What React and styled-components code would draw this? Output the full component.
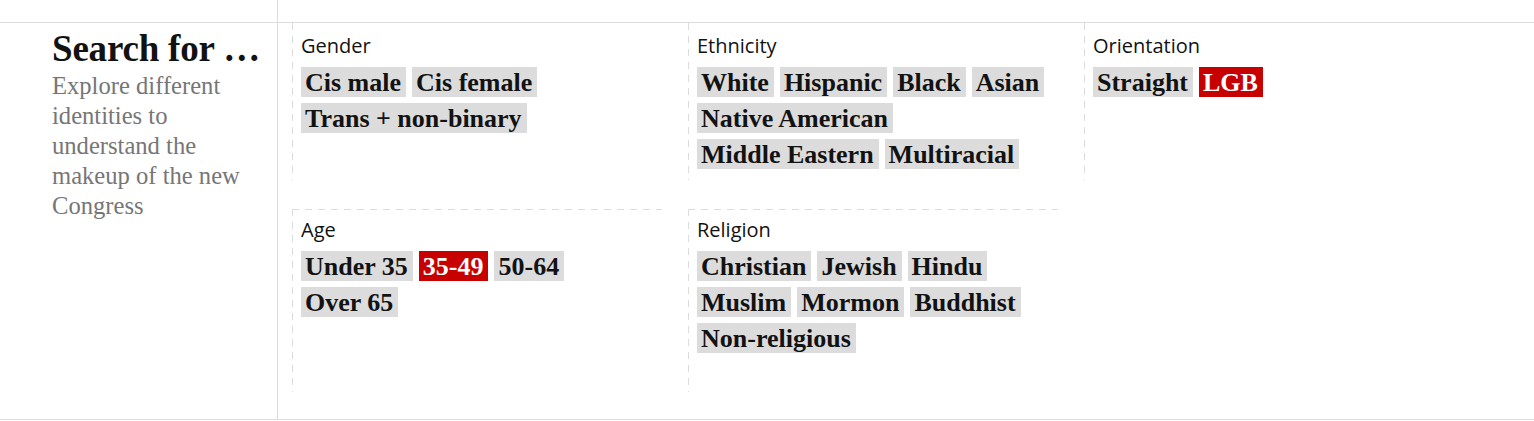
import React from "react";
import styled, { createGlobalStyle } from "styled-components";

const Global = createGlobalStyle`
  html, body { margin: 0; padding: 0; background: #ffffff; }
  body { font-family: "Liberation Serif", serif; color: #121212; }
`;

const Page = styled.div`
  display: flex;
  border-bottom: 1px solid #dcdcdc;
  background: #fff;
`;

const Side = styled.aside`
  width: 277px;
  flex: 0 0 277px;
  border-right: 1px solid #dcdcdc;
  display: flex;
  flex-direction: column;
`;

const Main = styled.main`
  flex: 1;
  display: flex;
  flex-direction: column;
`;

const TopBand = styled.div`
  height: 22px;
  border-bottom: 1px solid #dcdcdc;
`;

const Intro = styled.div`
  padding: 6px 16px 0 52px;
`;

const Heading = styled.h2`
  margin: 0;
  font-family: "Liberation Serif", serif;
  font-weight: 700;
  font-size: 37px;
  line-height: 40px;
  color: #121212;
  letter-spacing: -0.2px;
`;

const Blurb = styled.p`
  margin: 2px 0 0;
  width: 205px;
  font-family: "Liberation Serif", serif;
  font-weight: 400;
  font-size: 24.6px;
  line-height: 30px;
  color: #767676;
`;

const Grid = styled.div`
  display: grid;
  grid-template-columns: repeat(3, 370px);
  grid-template-rows: 157px 183px;
  column-gap: 26px;
  row-gap: 29px;
  padding: 0 0 27px 14px;
`;

const Cell = styled.section`
  padding: ${(p) => (p.$top ? "9px" : "11px")} 0 0 9px;
  background-image: linear-gradient(to bottom, #dcdcdc 54%, transparent 54%)
    ${(p) => (p.$top ? ", linear-gradient(to right, #dcdcdc 54%, transparent 54%)" : "")};
  background-size: 1px 13px ${(p) => (p.$top ? ", 13px 1px" : "")};
  background-repeat: repeat-y ${(p) => (p.$top ? ", repeat-x" : "")};
  background-position: left top ${(p) => (p.$top ? ", left top" : "")};
`;

const Label = styled.h3`
  margin: 0 0 9px;
  font-family: "Open Sans", sans-serif;
  font-weight: 400;
  font-size: 20px;
  line-height: 24px;
  color: #121212;
`;

const TagList = styled.div`
  display: flex;
  flex-direction: column;
  gap: 6px;
`;

const TagRow = styled.div`
  display: flex;
  gap: 6px;
`;

const Tag = styled.span`
  display: inline-block;
  height: 30px;
  padding: 0 5px 0 4px;
  font-family: "Liberation Serif", serif;
  font-weight: 700;
  font-size: 26px;
  line-height: 31px;
  white-space: nowrap;
  background: ${(p) => (p.$active ? "#c70000" : "#dcdcdc")};
  color: ${(p) => (p.$active ? "#ffffff" : "#121212")};
`;

const groups = [
  { label: "Gender", rows: [["Cis male", "Cis female"], ["Trans + non-binary"]] },
  {
    label: "Ethnicity",
    rows: [["White", "Hispanic", "Black", "Asian"], ["Native American"], ["Middle Eastern", "Multiracial"]],
  },
  { label: "Orientation", rows: [["Straight", "LGB"]] },
  { label: "Age", top: true, rows: [["Under 35", "35-49", "50-64"], ["Over 65"]] },
  {
    label: "Religion",
    top: true,
    rows: [["Christian", "Jewish", "Hindu"], ["Muslim", "Mormon", "Buddhist"], ["Non-religious"]],
  },
];

const active = new Set(["LGB", "35-49"]);

export default function App() {
  return (
    <>
      <Global />
      <Page>
        <Side>
          <TopBand />
          <Intro>
            <Heading>Search for …</Heading>
            <Blurb>Explore different identities to understand the makeup of the new Congress</Blurb>
          </Intro>
        </Side>
        <Main>
          <TopBand />
          <Grid>
            {groups.map((g) => (
              <Cell key={g.label} $top={g.top}>
                <Label>{g.label}</Label>
                <TagList>
                  {g.rows.map((row, i) => (
                    <TagRow key={i}>
                      {row.map((t) => (
                        <Tag key={t} $active={active.has(t)}>
                          {t}
                        </Tag>
                      ))}
                    </TagRow>
                  ))}
                </TagList>
              </Cell>
            ))}
          </Grid>
        </Main>
      </Page>
    </>
  );
}
